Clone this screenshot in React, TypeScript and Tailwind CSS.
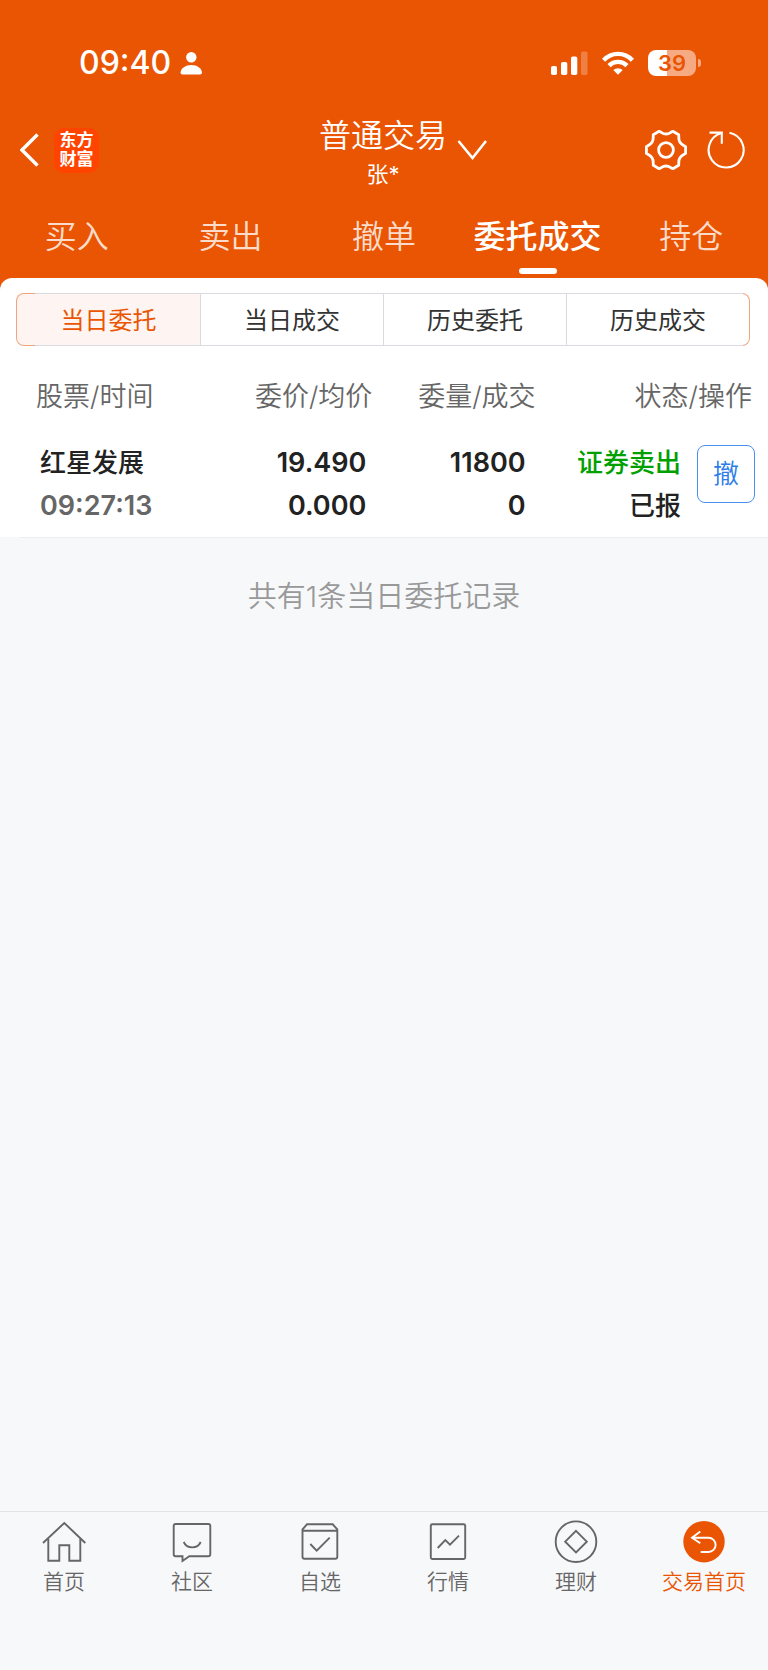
import React from 'react';
import clsx from 'clsx';

const tabs = ['买入', '卖出', '撤单', '委托成交', '持仓'];
const filters = ['当日委托', '当日成交', '历史委托', '历史成交'];

const orders = [
  {
    name: '红星发展',
    time: '09:27:13',
    price: '19.490',
    average: '0.000',
    amount: '11800',
    filled: '0',
    side: '证券卖出',
    status: '已报',
  },
];

const navItems = [
  {
    label: '首页',
    icon: (
      <>
        <path d="M1 23 22.3 3 43.3 23" />
        <path d="M6.3 19V40.7H17.3V25.3H27.3V40.7H38.3V19" />
      </>
    ),
  },
  {
    label: '社区',
    icon: (
      <>
        <path d="M5.7 4H38.3Q40.3 4 40.3 6V34.3Q40.3 36.3 38.3 36.3H19.3L12.5 41V36.3H5.7Q3.7 36.3 3.7 34.3V6Q3.7 4 5.7 4Z" />
        <path d="M13.7 22C17 29.2 27.4 29.2 30.7 22" />
      </>
    ),
  },
  {
    label: '自选',
    icon: (
      <>
        <path d="M4.5 10.7H39.3V36.7Q39.3 38.7 37.3 38.7H6.5Q4.5 38.7 4.5 36.7V9.3L9 4.3H34.7L39.3 9.3V10.7" />
        <path d="M12.3 24 18.7 30.7 31.7 17.7" />
      </>
    ),
  },
  {
    label: '行情',
    icon: (
      <>
        <rect x="4.8" y="4.2" width="34.4" height="34.8" rx="1.5" />
        <path d="M11.7 28 19.3 20 24 24.7 33 15.7" />
      </>
    ),
  },
  {
    label: '理财',
    icon: (
      <>
        <circle cx="22" cy="21.7" r="20.3" />
        <path d="M22 10.9 32.8 21.7 22 32.5 11.2 21.7Z" />
      </>
    ),
  },
  {
    label: '交易首页',
    active: true,
    icon: (
      <>
        <circle cx="22" cy="21.7" r="20.7" fill="#ea5504" stroke="none" />
        <path
          d="M18.3 11.5 10 17.8 18.3 23.3M10 17.8H26.5A7.1 7.1 0 0 1 26.5 32H18.7"
          stroke="#fff"
        />
      </>
    ),
  },
];

function StatusBar() {
  return (
    <div className="flex h-[100px] items-center justify-between pt-[25px] pr-[67px] pl-[79px]">
      <div className="flex items-center gap-2">
        <span className="text-[32px] leading-10 font-medium">09:40</span>
        <svg className="h-6 w-6" viewBox="0 0 24 24" fill="currentColor">
          <circle cx="12.3" cy="6.3" r="5.2" />
          <path d="M3.5 23.5Q1.5 23.5 1.5 21.5C2 17.2 6.5 14 12.3 14S22.6 17.2 23 21.5Q23 23.5 21 23.5Z" />
        </svg>
      </div>
      <div className="flex items-center">
        <svg className="h-6 w-[37px]" viewBox="0 0 37 24" fill="currentColor">
          <rect x="0" y="15" width="6" height="9" rx="1.8" />
          <rect x="10" y="11" width="6.3" height="13" rx="1.8" />
          <rect x="20" y="5.5" width="6.3" height="18.5" rx="1.8" />
          <rect x="30" y="0.5" width="6.5" height="23.5" rx="1.8" opacity="0.25" />
        </svg>
        <svg className="ml-[14px] h-6 w-8" viewBox="0 0 32 24" fill="none" stroke="currentColor" strokeWidth="4.4">
          <path d="M1.6 9.2C9.6 0.8 22.4 0.8 30.4 9.2" />
          <path d="M7 14.6C12 9.6 20 9.6 25 14.6" />
          <path d="M16 23.8 11.3 19Q16 15.4 20.7 19Z" fill="currentColor" stroke="none" />
        </svg>
        <div className="ml-[14px] flex h-[26px] w-12 items-center justify-center rounded-lg bg-[linear-gradient(to_right,#fff_39%,#f5aa82_39%)] text-[22px] leading-none font-semibold text-[#ea5504]">
          39
        </div>
        <span className="ml-0.5 h-2 w-[3px] rounded-r-full bg-[#f5aa82]" />
      </div>
    </div>
  );
}

function TitleBar() {
  return (
    <div className="grid h-[100px] grid-cols-[1fr_auto_1fr] items-center pr-[22px] pl-5">
      <div className="flex items-center gap-[14px]">
        <button aria-label="返回">
          <svg className="h-9 w-5" viewBox="0 0 20 36" fill="none" stroke="currentColor" strokeWidth="3.4">
            <path d="M17.5 2.5 2 18 17.5 33.5" />
          </svg>
        </button>
        <div className="flex h-[45px] w-[45px] flex-col items-center justify-center rounded-[10px] bg-[#ff4400] text-[17px] leading-[19px] font-bold">
          <span>东方</span>
          <span>财富</span>
        </div>
      </div>
      <div className="pt-[3px] text-center">
        <h1 className="text-[32px] leading-10 font-[350]">普通交易</h1>
        <p className="mt-1 text-[22px] leading-7">张*</p>
      </div>
      <div className="flex items-center justify-between pl-[10px]">
        <button aria-label="切换账户">
          <svg className="h-5 w-[30px]" viewBox="0 0 30 20" fill="none" stroke="currentColor" strokeWidth="2.6">
            <path d="M1.5 1 15.5 18 29 1" />
          </svg>
        </button>
        <div className="flex items-center gap-[18px]">
          <button aria-label="设置">
            <svg
              className="h-11 w-11"
              viewBox="-22 -22 44 44"
              fill="none"
              stroke="currentColor"
              strokeWidth="2.8"
              strokeLinejoin="round"
            >
              <path d="M19.6 -3.4V3.4L17.3 4.8Q12.6 7.3 12.8 12.6L12.7 15.3L6.9 18.7L4.5 17.4Q0 14.6 -4.5 17.4L-6.9 18.7L-12.7 15.3L-12.8 12.6Q-12.6 7.3 -17.3 4.8L-19.6 3.4V-3.4L-17.3 -4.8Q-12.6 -7.3 -12.8 -12.6L-12.7 -15.3L-6.9 -18.7L-4.5 -17.4Q0 -14.6 4.5 -17.4L6.9 -18.7L12.7 -15.3L12.8 -12.6Q12.6 -7.3 17.3 -4.8Z" />
              <circle r="7.4" />
            </svg>
          </button>
          <button aria-label="刷新">
            <svg className="h-10 w-10" viewBox="-20 -20 40 40" fill="none" stroke="currentColor" strokeWidth="2.1">
              <path d="M3.5 -17.2A17.5 17.5 0 1 1 -4.5 -16.9" />
              <path d="M-16.5 -17.4H-4.2V-6.2" />
            </svg>
          </button>
        </div>
      </div>
    </div>
  );
}

function OrderTable() {
  return (
    <table className="w-full table-fixed text-[27px]">
      <colgroup>
        <col className="w-[24%]" />
        <col className="w-[25%]" />
        <col className="w-[21%]" />
        <col className="w-[30%]" />
      </colgroup>
      <thead>
        <tr className="h-[95px] whitespace-nowrap text-[#666]">
          <th className="pt-2 pl-9 text-left font-[350]">股票/时间</th>
          <th className="pt-2 pr-1 text-right font-[350]">委价/均价</th>
          <th className="pt-2 pr-[2px] text-right font-[350]">委量/成交</th>
          <th className="pt-2 pr-4 text-right font-[350]">状态/操作</th>
        </tr>
      </thead>
      <tbody>
        {orders.map((order) => (
          <tr key={order.time} className="align-top leading-[43px] font-medium whitespace-nowrap text-[#222]">
            <td className="pb-[10px] pl-10">
              <div className="text-[26px]">{order.name}</div>
              <div className="font-semibold text-[#666]">{order.time}</div>
            </td>
            <td className="pr-[10px] pb-[10px] text-right font-semibold">
              <div>{order.price}</div>
              <div>{order.average}</div>
            </td>
            <td className="pr-3 pb-[10px] text-right font-semibold">
              <div>{order.amount}</div>
              <div>{order.filled}</div>
            </td>
            <td className="pr-[13px] pb-[10px]">
              <div className="flex items-start justify-end gap-4">
                <div className="text-right text-[26px]">
                  <div className="text-[#00a000]">{order.side}</div>
                  <div>{order.status}</div>
                </div>
                <button className="mt-1 h-[58px] w-[58px] rounded-lg border border-[#4a90f0] text-[26px] leading-none font-[350] text-[#2b7de9]">
                  撤
                </button>
              </div>
            </td>
          </tr>
        ))}
      </tbody>
    </table>
  );
}

function BottomNav() {
  return (
    <nav className="grid grid-cols-6 border-t border-[#e2e3e5] pt-2 pb-[74px]">
      {navItems.map((item) => (
        <a
          key={item.label}
          href="#"
          className={clsx('flex flex-col items-center', item.active ? 'text-[#ea5504]' : 'text-[#666]')}
        >
          <svg className="h-11 w-11" viewBox="0 0 44 44" fill="none" stroke="currentColor" strokeWidth="1.9">
            {item.icon}
          </svg>
          <span className="mt-1 text-[21px] leading-7 font-[350]">{item.label}</span>
        </a>
      ))}
    </nav>
  );
}

export default function App() {
  return (
    <div className="flex min-h-screen flex-col bg-[#f7f8fa] font-['Inter','Noto_Sans_CJK_SC',sans-serif]">
      <header className="bg-[#ea5504] text-white">
        <StatusBar />
        <TitleBar />
        <nav className="grid grid-cols-5">
          {tabs.map((tab) => {
            const active = tab === '委托成交';
            return (
              <a
                key={tab}
                href="#"
                className={clsx(
                  'flex flex-col items-center pt-[14px] pb-1 text-[32px] leading-[46px] whitespace-nowrap',
                  active ? 'font-medium' : 'font-[350] text-[#fbdccb]',
                )}
              >
                {tab}
                <span className={clsx('mt-2 h-1.5 w-[38px] rounded-full', active && 'bg-white')} />
              </a>
            );
          })}
        </nav>
      </header>

      <main className="flex-1">
        <div className="bg-[#ea5504]">
          <section className="rounded-t-xl bg-white pt-[15px]">
            <div className="mr-[18px] ml-4 rounded-lg bg-[linear-gradient(to_right,#f0a57f_19px,#d9dbe0_19px,#d9dbe0_calc(100%-7px),#f0a57f_calc(100%-7px))] p-px">
              <div className="grid grid-cols-4 overflow-hidden rounded-[7px]">
                {filters.map((filter, i) => (
                  <button
                    key={filter}
                    className={clsx(
                      'h-[51px] pt-0.5 text-[24px]',
                      i === 0 ? 'bg-[#fef5f2] text-[#ea5504]' : 'border-l border-[#d9dbe0] bg-white text-[#333]',
                    )}
                  >
                    {filter}
                  </button>
                ))}
              </div>
            </div>
            <OrderTable />
          </section>
        </div>
        <div className="ml-5 h-px bg-[#eceef0]" />
        <p className="mt-9 text-center text-[29px] leading-[46px] font-[350] text-[#999]">共有1条当日委托记录</p>
      </main>

      <BottomNav />
    </div>
  );
}
